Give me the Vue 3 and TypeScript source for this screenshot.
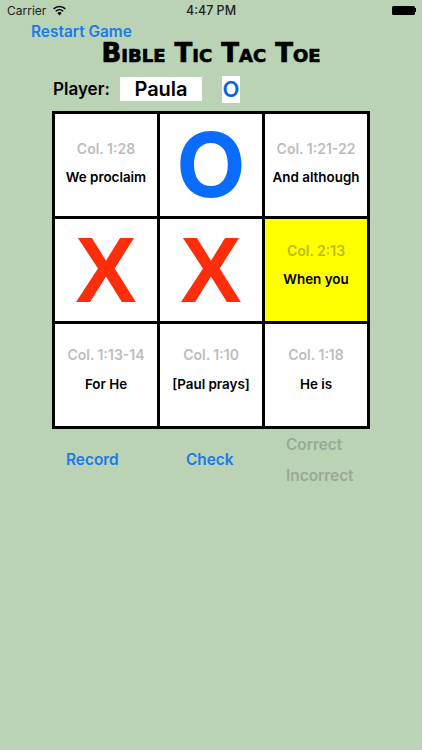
<script setup lang="ts">
interface Cell { ref?: string; text?: string; mark?: 'X' | 'O'; active?: boolean }
const cells: Cell[] = [
  { ref: 'Col. 1:28', text: 'We proclaim' },
  { mark: 'O' },
  { ref: 'Col. 1:21-22', text: 'And although' },
  { mark: 'X' },
  { mark: 'X' },
  { ref: 'Col. 2:13', text: 'When you', active: true },
  { ref: 'Col. 1:13-14', text: 'For He' },
  { ref: 'Col. 1:10', text: '[Paul prays]' },
  { ref: 'Col. 1:18', text: 'He is' },
]
</script>

<template>
  <div class="screen">
    <div class="status">
      <div class="status-left">
        <span>Carrier</span>
        <svg class="wifi" viewBox="0 0 16 12" width="15" height="11">
          <path d="M8 11.5 5.6 8.7a3.6 3.6 0 0 1 4.8 0Z" fill="#000" />
          <path d="M3.9 6.8a6 6 0 0 1 8.2 0" fill="none" stroke="#000" stroke-width="1.6" />
          <path d="M1.6 4.2a9.4 9.4 0 0 1 12.8 0" fill="none" stroke="#000" stroke-width="1.6" />
        </svg>
      </div>
      <span class="time">4:47 PM</span>
      <div class="battery"><i class="battery-body"></i><i class="battery-tip"></i></div>
    </div>
    <div class="restart">Restart Game</div>
    <h1 class="title">Bible Tic Tac Toe</h1>
    <div class="player">
      <span class="player-label">Player:</span>
      <span class="player-name">Paula</span>
      <span class="player-mark">O</span>
    </div>
    <div class="board">
      <div v-for="(c, i) in cells" :key="i" class="cell" :class="{ active: c.active, marked: c.mark }">
        <span v-if="c.mark" class="mark" :class="c.mark === 'X' ? 'x' : 'o'">{{ c.mark }}</span>
        <template v-else>
          <span class="ref">{{ c.ref }}</span>
          <span class="text">{{ c.text }}</span>
        </template>
      </div>
    </div>
    <div class="actions">
      <span class="action record">Record</span>
      <span class="action check">Check</span>
      <div class="grade">
        <span>Correct</span>
        <span>Incorrect</span>
      </div>
    </div>
  </div>
</template>

<style>
html, body { margin: 0; background: #bad3b5; }
</style>

<style scoped>
.screen {
  width: 422px;
  height: 750px;
  overflow: hidden;
  background: #bad3b5;
  font-family: Inter, "Liberation Sans", sans-serif;
  color: #000;
  display: flex;
  flex-direction: column;
}
.status {
  height: 20px;
  position: relative;
  display: flex;
  align-items: center;
  justify-content: space-between;
  padding: 0 6px 0 7px;
  font-size: 12px;
  color: #222;
}
.status-left { display: flex; align-items: center; gap: 6px; }
.time {
  position: absolute;
  left: 0;
  right: 0;
  text-align: center;
  font-size: 12.5px;
  font-weight: 500;
}
.battery { display: flex; align-items: center; }
.battery-body { display: block; width: 23px; height: 9px; background: #000; border-radius: 1.5px; }
.battery-tip { display: block; width: 1.5px; height: 4px; background: #000; }
.restart {
  margin: 3px 0 0 31px;
  height: 18px;
  line-height: 18px;
  font-size: 15.4px;
  font-weight: 600;
  color: #1b7be8;
}
.title {
  margin: 0;
  height: 25px;
  line-height: 25px;
  text-align: center;
  font-family: "DejaVu Sans", sans-serif;
  font-size: 26px;
  font-weight: 700;
  font-variant: small-caps;
  -webkit-text-stroke: 0.7px #000;
  color: #000;
}
.player {
  margin-top: 10px;
  height: 26px;
  display: flex;
  align-items: center;
  font-weight: 600;
}
.player-label { margin-left: 53px; width: 67px; font-size: 17px; }
.player-name {
  width: 82px;
  height: 24px;
  line-height: 24px;
  background: #fff;
  text-align: center;
  font-size: 20px;
  font-weight: 600;
}
.player-mark {
  margin-left: 20px;
  width: 18px;
  height: 27px;
  line-height: 27px;
  background: #fff;
  text-align: center;
  font-size: 22px;
  color: #0f62e6;
}
.board {
  margin: 9px 0 0 52px;
  width: 318px;
  box-sizing: border-box;
  display: grid;
  grid-template-columns: repeat(3, 102px);
  grid-auto-rows: 102px;
  gap: 3px;
  padding: 3px;
  background: #000;
}
.cell {
  background: #fff;
  display: flex;
  flex-direction: column;
  align-items: center;
  padding-top: 27px;
  box-sizing: border-box;
}
.cell:nth-child(n+4) { padding-top: 24px; }
.cell:nth-child(n+7) { padding-top: 23px; }
.cell:nth-child(n+7) .text { margin-top: 13px; }
.cell.marked { padding-top: 0; }
.cell.active { background: #ffff00; }
.ref {
  height: 16px;
  line-height: 16px;
  font-size: 14px;
  font-weight: 600;
  color: #bdbdbd;
  white-space: nowrap;
}
.active .ref { color: #bcbc1a; }
.text {
  margin-top: 12px;
  height: 16px;
  line-height: 16px;
  font-size: 13.4px;
  font-weight: 600;
  white-space: nowrap;
}
.mark {
  height: 102px;
  line-height: 102px;
}
.mark.x { color: #ff2d0a; font-family: "Liberation Sans", sans-serif; font-weight: 700; font-size: 92px; }
.mark.o { color: #0a6cff; font-size: 90px; font-weight: 700; }
.actions {
  margin-top: 6px;
  height: 60px;
  display: flex;
  align-items: flex-start;
  font-size: 15.4px;
  font-weight: 600;
}
.action { color: #1b7be8; margin-top: 15px; }
.record { margin-left: 66px; width: 120px; }
.check { width: 100px; }
.grade {
  display: flex;
  flex-direction: column;
  gap: 12px;
  color: #9aa89a;
}
</style>
